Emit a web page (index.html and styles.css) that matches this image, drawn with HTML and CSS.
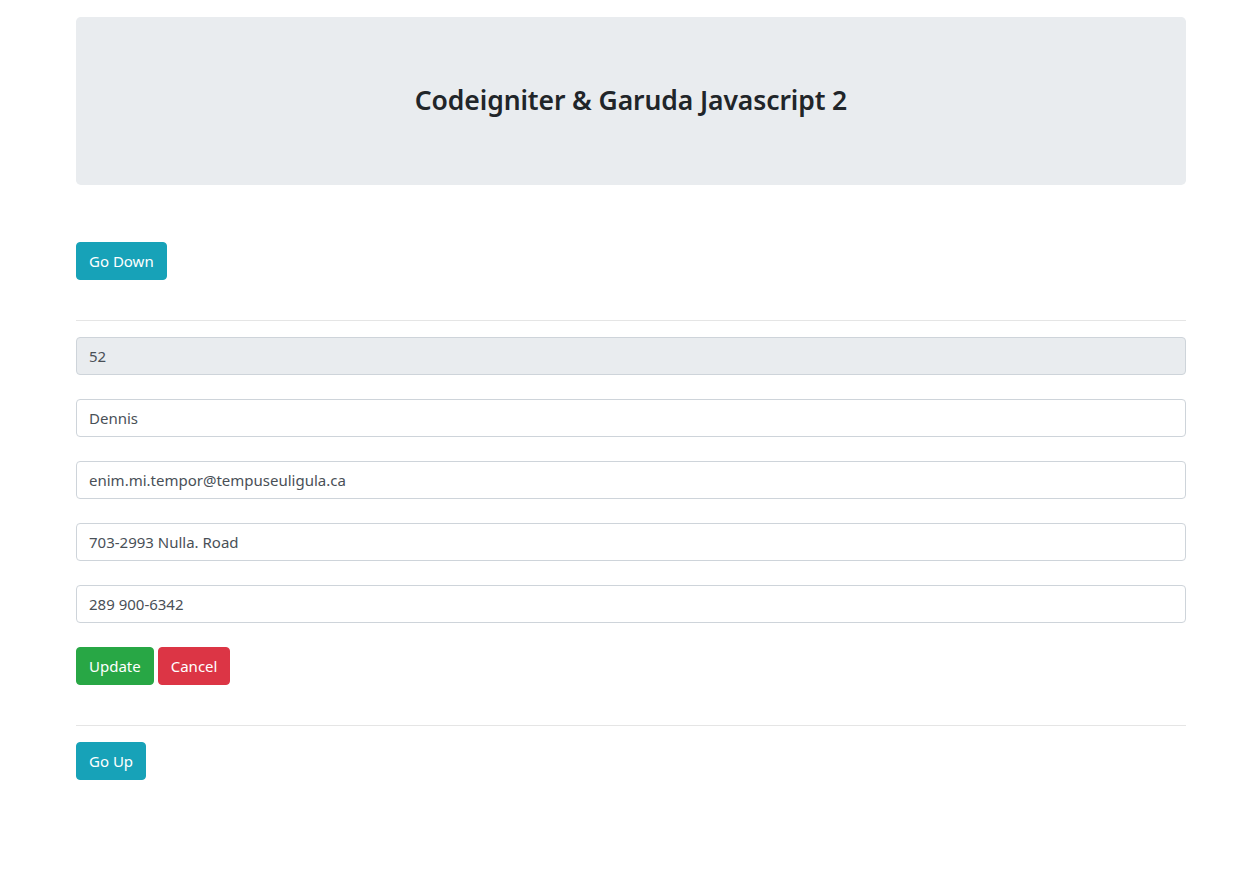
FILE: index.html
```html
<!DOCTYPE html>
<html>
<head>
<meta charset="utf-8">
<title>Codeigniter &amp; Garuda Javascript 2</title>
<link rel="stylesheet" href="styles.css">
</head>
<body>
<div class="container">
  <div class="jumbotron">
    <h3 class="title">Codeigniter &amp; Garuda Javascript 2</h3>
  </div>
  <div class="top-actions">
    <button class="btn btn-info">Go Down</button>
  </div>
  <hr class="divider">
  <form class="form">
    <input class="form-control" type="text" value="52" readonly>
    <input class="form-control" type="text" value="Dennis">
    <input class="form-control" type="text" value="enim.mi.tempor@tempuseuligula.ca">
    <input class="form-control" type="text" value="703-2993 Nulla. Road">
    <input class="form-control" type="text" value="289 900-6342">
    <div class="btn-row">
      <button type="button" class="btn btn-success">Update</button>
      <button type="button" class="btn btn-danger">Cancel</button>
    </div>
  </form>
  <hr class="divider">
  <div class="bottom-actions">
    <button class="btn btn-info">Go Up</button>
  </div>
</div>
</body>
</html>
```
FILE: styles.css
```css
* { box-sizing: border-box; }
body {
  margin: 0;
  font-family: "Noto Sans", "Open Sans", sans-serif;
  font-size: 15px;
  line-height: 1.5;
  color: #212529;
  background: #fff;
}
.container {
  width: 1110px;
  margin: 0 0 0 calc(50% - 548px);
  padding-top: 17px;
}
.jumbotron {
  background: #e9ecef;
  border-radius: 4.8px;
  padding: 63px 32px;
  text-align: center;
}
.title {
  margin: 0;
  font-size: 26.5px;
  font-weight: 600;
  line-height: 40px;
  padding-bottom: 2px;
  letter-spacing: -0.1px;
}
.top-actions { margin-top: 57px; }
.divider {
  margin: 40px 0 16px;
  border: 0;
  border-top: 1px solid rgba(0,0,0,.1);
  height: 0;
}
.form {
  display: flex;
  flex-direction: column;
  gap: 24px;
}
.form-control {
  display: block;
  width: 100%;
  height: 38px;
  padding: 6px 12px;
  font-family: inherit;
  font-size: 15px;
  line-height: 24px;
  color: #495057;
  background: #fff;
  border: 1px solid #ced4da;
  border-radius: 4px;
  margin: 0;
}
.form-control[readonly] { background: #e9ecef; }
.btn-row { display: flex; gap: 4px; }
.btn {
  display: inline-block;
  height: 38px;
  padding: 6px 12px;
  font-family: inherit;
  font-size: 15px;
  line-height: 24px;
  color: #fff;
  border: 1px solid transparent;
  border-radius: 4px;
  cursor: pointer;
  margin: 0;
}
.btn-info { background: #17a2b8; border-color: #17a2b8; }
.btn-success { background: #28a745; border-color: #28a745; }
.btn-danger { background: #dc3545; border-color: #dc3545; }
```
